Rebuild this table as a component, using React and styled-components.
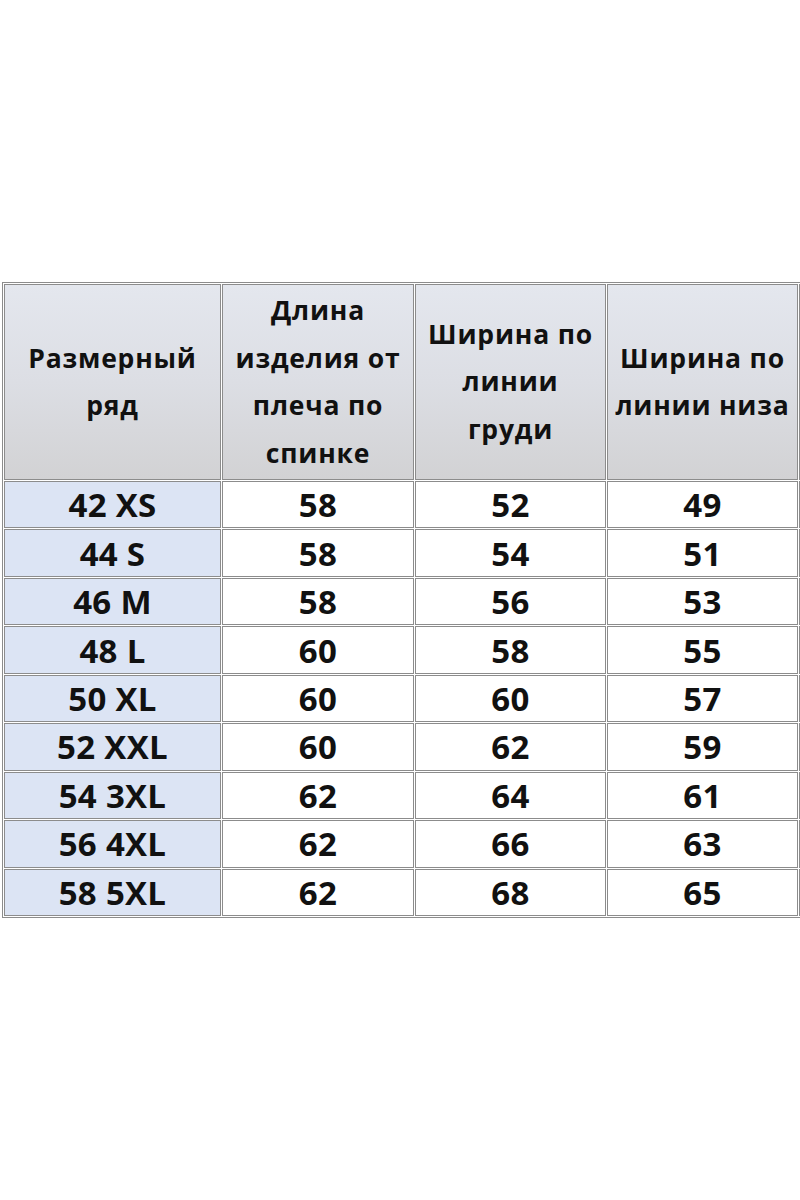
import React from "react";
import styled, { createGlobalStyle } from "styled-components";

const Global = createGlobalStyle`
  html, body { margin: 0; padding: 0; background: #fff; }
  body { width: 800px; height: 1200px; overflow: hidden; }
`;

const Page = styled.div`
  width: 800px;
  height: 1200px;
  overflow: hidden;
  background: #fff;
  padding-top: 282px;
  padding-left: 2px;
  box-sizing: border-box;
`;

const Table = styled.div`
  display: grid;
  grid-template-columns: 217px 192px 191px 191px 191px;
  grid-template-rows: 196px repeat(9, 47.45px);
  gap: 1px;
  padding: 1px;
  border: 1px solid #8c8c8c;
  width: max-content;
  background: #fff;
  font-family: "Open Sans", "Liberation Sans", sans-serif;
  font-weight: 700;
  color: #111;
`;

const Cell = styled.div`
  box-sizing: border-box;
  border: 1px solid #8c8c8c;
  display: flex;
  align-items: center;
  justify-content: center;
  text-align: center;
  white-space: nowrap;
  background: ${(p) =>
    p.$kind === "head"
      ? "linear-gradient(180deg, #e4e7ee 0%, #dcdee4 50%, #d2d2d4 100%)"
      : p.$kind === "size"
      ? "#dce4f4"
      : "#fff"};
`;

const HeadText = styled.div`
  font-size: 26.5px;
  line-height: 47.5px;
  letter-spacing: 0.8px;
`;

const Value = styled.span`
  font-size: 33px;
  line-height: 1;
  letter-spacing: 0.3px;
`;

const headers = [
  ["Размерный", "ряд"],
  ["Длина", "изделия от", "плеча по", "спинке"],
  ["Ширина по", "линии", "груди"],
  ["Ширина по", "линии низа"],
  [],
];

const rows = [
  ["42 XS", "58", "52", "49"],
  ["44 S", "58", "54", "51"],
  ["46 M", "58", "56", "53"],
  ["48 L", "60", "58", "55"],
  ["50 XL", "60", "60", "57"],
  ["52 XXL", "60", "62", "59"],
  ["54 3XL", "62", "64", "61"],
  ["56 4XL", "62", "66", "63"],
  ["58 5XL", "62", "68", "65"],
];

export default function App() {
  return (
    <Page>
      <Global />
      <Table>
        {headers.map((lines, i) => (
          <Cell key={"h" + i} $kind="head">
            <HeadText>
              {lines.map((l, j) => (
                <div key={j}>{l}</div>
              ))}
            </HeadText>
          </Cell>
        ))}
        {rows.map((r, i) => (
          <React.Fragment key={"r" + i}>
            {r.map((v, j) => (
              <Cell key={j} $kind={j === 0 ? "size" : "data"}>
                <Value>{v}</Value>
              </Cell>
            ))}
            <Cell $kind="data" />
          </React.Fragment>
        ))}
      </Table>
    </Page>
  );
}
